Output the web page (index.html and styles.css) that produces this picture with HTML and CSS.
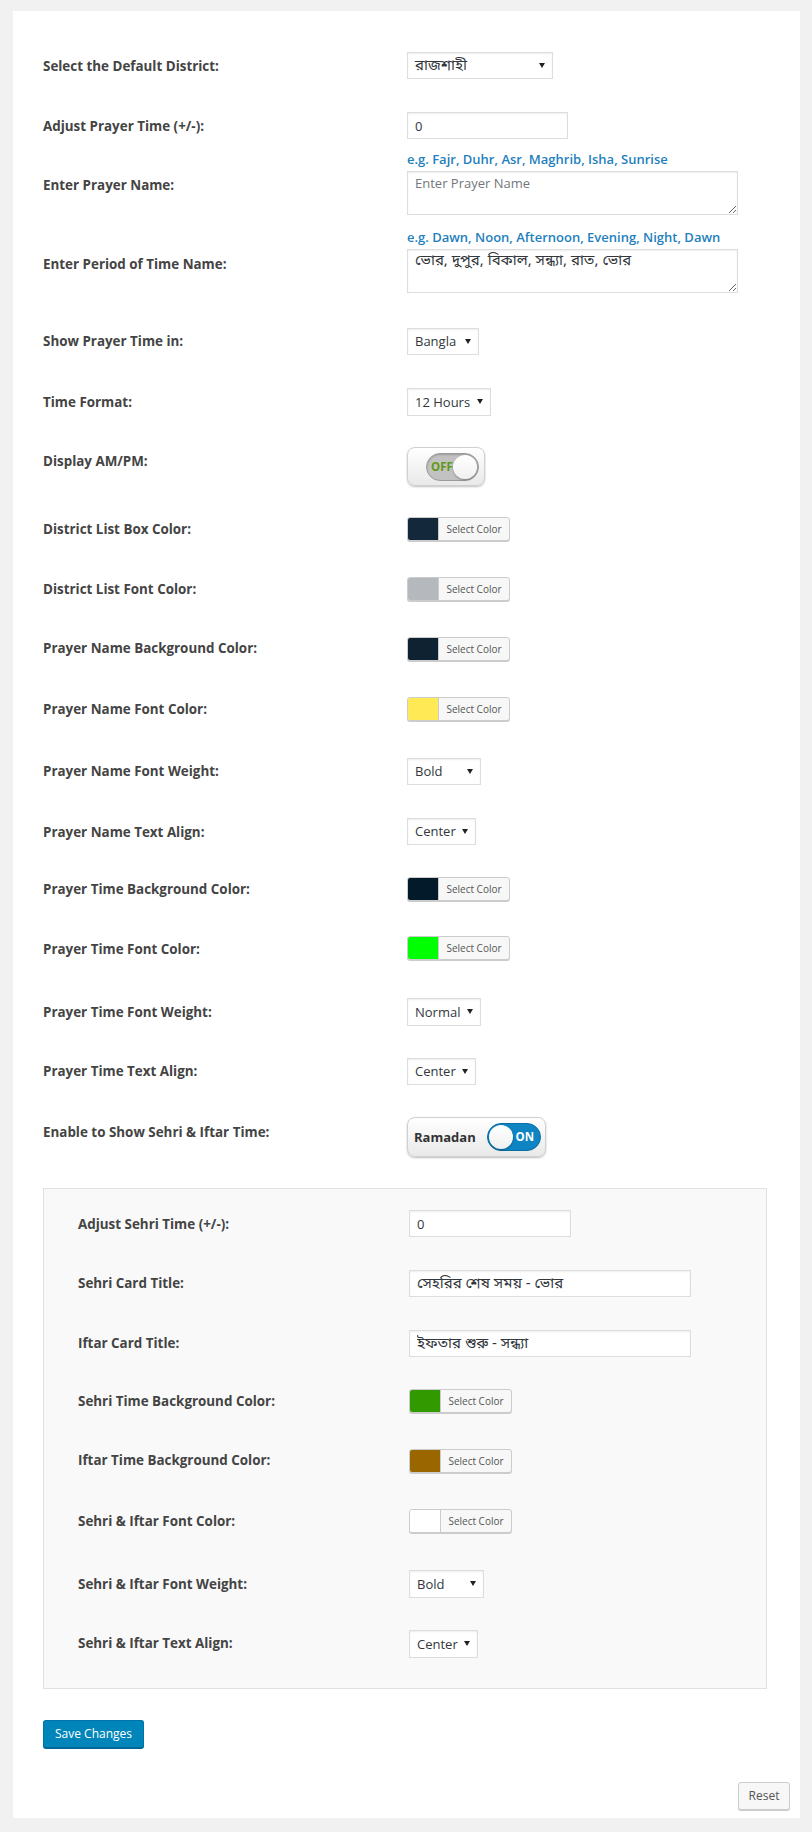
FILE: index.html
```html
<!DOCTYPE html>
<html lang="en">
<head>
<meta charset="utf-8">
<title>Prayer Time Settings</title>
<link rel="stylesheet" href="styles.css">
</head>
<body>
<div class="card">
  <form class="settings">
    <div class="row h60">
      <div class="label">Select the Default District:</div>
      <div class="field"><span class="select w146"><span class="bn">রাজশাহী</span></span></div>
    </div>
    <div class="row h53">
      <div class="label">Adjust Prayer Time (+/-):</div>
      <div class="field"><input class="text w161" type="text" value="0"></div>
    </div>
    <div class="row h78">
      <div class="label lp26">Enter Prayer Name:</div>
      <div class="field fp0">
        <div class="hint">e.g. Fajr, Duhr, Asr, Maghrib, Isha, Sunrise</div>
        <textarea class="area" placeholder="Enter Prayer Name"></textarea>
      </div>
    </div>
    <div class="row h85">
      <div class="label lp27">Enter Period of Time Name:</div>
      <div class="field fp0">
        <div class="hint">e.g. Dawn, Noon, Afternoon, Evening, Night, Dawn</div>
        <textarea class="area bn">ভোর, দুপুর, বিকাল, সন্ধ্যা, রাত, ভোর</textarea>
      </div>
    </div>
    <div class="row h60">
      <div class="label lp19">Show Prayer Time in:</div>
      <div class="field"><span class="select w72">Bangla</span></div>
    </div>
    <div class="row h59">
      <div class="label">Time Format:</div>
      <div class="field"><span class="select w84 tall">12 Hours</span></div>
    </div>
    <div class="row h70">
      <div class="label">Display AM/PM:</div>
      <div class="field">
        <span class="toggle off-toggle"><span class="track off"><span class="track-text">OFF</span><span class="knob"></span></span></span>
      </div>
    </div>
    <div class="row h60">
      <div class="label lp18">District List Box Color:</div>
      <div class="field"><span class="color-btn"><span class="swatch" style="background:#13283a"></span><span class="color-text">Select Color</span></span></div>
    </div>
    <div class="row h60">
      <div class="label lp18">District List Font Color:</div>
      <div class="field"><span class="color-btn"><span class="swatch" style="background:#b5b9bd"></span><span class="color-text">Select Color</span></span></div>
    </div>
    <div class="row h60">
      <div class="label lp17">Prayer Name Background Color:</div>
      <div class="field"><span class="color-btn"><span class="swatch" style="background:#0f2232"></span><span class="color-text">Select Color</span></span></div>
    </div>
    <div class="row h61">
      <div class="label lp18">Prayer Name Font Color:</div>
      <div class="field"><span class="color-btn"><span class="swatch" style="background:#ffe955"></span><span class="color-text">Select Color</span></span></div>
    </div>
    <div class="row h60">
      <div class="label lp19">Prayer Name Font Weight:</div>
      <div class="field"><span class="select w74">Bold</span></div>
    </div>
    <div class="row h59">
      <div class="label">Prayer Name Text Align:</div>
      <div class="field"><span class="select w69">Center</span></div>
    </div>
    <div class="row h59">
      <div class="label lp18">Prayer Time Background Color:</div>
      <div class="field"><span class="color-btn"><span class="swatch" style="background:#021a2a"></span><span class="color-text">Select Color</span></span></div>
    </div>
    <div class="row h62">
      <div class="label lp19">Prayer Time Font Color:</div>
      <div class="field"><span class="color-btn"><span class="swatch" style="background:#00ff00"></span><span class="color-text">Select Color</span></span></div>
    </div>
    <div class="row h60">
      <div class="label">Prayer Time Font Weight:</div>
      <div class="field"><span class="select w74 tall">Normal</span></div>
    </div>
    <div class="row h59">
      <div class="label lp19">Prayer Time Text Align:</div>
      <div class="field"><span class="select w69">Center</span></div>
    </div>
    <div class="row h70">
      <div class="label lp21">Enable to Show Sehri &amp; Iftar Time:</div>
      <div class="field">
        <span class="toggle ramadan-toggle"><span class="toggle-label">Ramadan</span><span class="track on"><span class="knob"></span><span class="track-text">ON</span></span></span>
      </div>
    </div>

    <div class="panel">
      <div class="row h60">
        <div class="label">Adjust Sehri Time (+/-):</div>
        <div class="field"><input class="text w162" type="text" value="0"></div>
      </div>
      <div class="row h60">
        <div class="label lp19">Sehri Card Title:</div>
        <div class="field"><input class="text w282 bn" type="text" value="সেহরির শেষ সময় - ভোর"></div>
      </div>
      <div class="row h59">
        <div class="label lp19">Iftar Card Title:</div>
        <div class="field"><input class="text w282 bn" type="text" value="ইফতার শুরু - সন্ধ্যা"></div>
      </div>
      <div class="row h60">
        <div class="label lp18">Sehri Time Background Color:</div>
        <div class="field"><span class="color-btn"><span class="swatch" style="background:#339900"></span><span class="color-text">Select Color</span></span></div>
      </div>
      <div class="row h60">
        <div class="label lp17">Iftar Time Background Color:</div>
        <div class="field"><span class="color-btn"><span class="swatch" style="background:#996600"></span><span class="color-text">Select Color</span></span></div>
      </div>
      <div class="row h61">
        <div class="label lp18">Sehri &amp; Iftar Font Color:</div>
        <div class="field"><span class="color-btn"><span class="swatch" style="background:#ffffff"></span><span class="color-text">Select Color</span></span></div>
      </div>
      <div class="row h60">
        <div class="label">Sehri &amp; Iftar Font Weight:</div>
        <div class="field"><span class="select w75 tall">Bold</span></div>
      </div>
      <div class="row h58">
        <div class="label lp19">Sehri &amp; Iftar Text Align:</div>
        <div class="field"><span class="select w69 tall">Center</span></div>
      </div>
    </div>

    <div class="actions">
      <button type="button" class="btn-primary">Save Changes</button>
    </div>
    <div class="reset-row">
      <button type="button" class="btn-secondary">Reset</button>
    </div>
  </form>
</div>
</body>
</html>
```
FILE: styles.css
```css
html, body {
  margin: 0;
  padding: 0;
}
body {
  background: #f1f1f1;
  font-family: "Open Sans", "Noto Sans", "Noto Sans Bengali", "Lohit Bengali", sans-serif;
  color: #444;
  height: 1832px;
  overflow: hidden;
}
.bn {
  font-family: "Noto Sans Bengali", "Lohit Bengali", "Noto Serif Bengali", "FreeSerif", "Open Sans", sans-serif;
}
.card {
  margin: 11px 12px 0 13px;
  background: #fff;
  padding: 26px 10px 8px 30px;
}
.settings {
  display: flex;
  flex-direction: column;
}
.row {
  display: flex;
  align-items: flex-start;
  box-sizing: border-box;
}
.h53 { height: 53px; }
.h58 { height: 58px; }
.h59 { height: 59px; }
.h60 { height: 60px; }
.h61 { height: 61px; }
.h62 { height: 62px; }
.h70 { height: 70px; }
.h78 { height: 78px; }
.h85 { height: 85px; }

.label {
  width: 364px;
  flex: none;
  padding-top: 20px;
  font-size: 13.4px;
  font-weight: 700;
  line-height: 18px;
  color: #444;
}
.lp17 { padding-top: 17px; }
.lp18 { padding-top: 18px; }
.lp19 { padding-top: 19px; }
.lp21 { padding-top: 21px; }
.lp26 { padding-top: 26px; }
.lp27 { padding-top: 27px; }

.field {
  padding-top: 15px;
  display: flex;
  flex-direction: column;
  align-items: flex-start;
}
.fp0 { padding-top: 0; }

.hint {
  font-size: 13px;
  font-weight: 600;
  line-height: 18px;
  color: #1f7fbd;
  height: 18px;
  white-space: nowrap;
}

.select {
  position: relative;
  box-sizing: border-box;
  display: block;
  height: 27px;
  border: 1px solid #ddd;
  background: #fff;
  box-shadow: inset 0 1px 2px rgba(0, 0, 0, 0.07);
  padding: 0 0 0 7px;
  font-size: 13px;
  line-height: 25px;
  color: #32373c;
}
.select.tall { height: 28px; line-height: 26px; }
.select::after {
  content: "";
  position: absolute;
  right: 7px;
  top: 50%;
  margin-top: -3px;
  border-left: 3px solid transparent;
  border-right: 3px solid transparent;
  border-top: 5px solid #222;
}
.select .bn { font-size: 15px; }
.w69 { width: 69px; }
.w72 { width: 72px; }
.w74 { width: 74px; }
.w75 { width: 75px; }
.w84 { width: 84px; }
.w146 { width: 146px; }
.w161 { width: 161px; }
.w162 { width: 162px; }
.w282 { width: 282px; }

.text {
  box-sizing: border-box;
  height: 27px;
  margin: 0;
  border: 1px solid #ddd;
  background: #fff;
  box-shadow: inset 0 1px 2px rgba(0, 0, 0, 0.07);
  padding: 0 0 0 7px;
  font-family: "Open Sans", "Noto Sans", sans-serif;
  font-size: 13px;
  color: #32373c;
  outline: none;
}
.text.bn {
  font-family: "Noto Sans Bengali", "Lohit Bengali", "FreeSerif", "Open Sans", sans-serif;
  font-size: 15px;
}

.area {
  display: block;
  box-sizing: border-box;
  width: 331px;
  height: 44px;
  margin: 3px 0 0;
  border: 1px solid #ddd;
  background: #fff;
  box-shadow: inset 0 1px 2px rgba(0, 0, 0, 0.07);
  padding: 2px 7px;
  font-family: "Open Sans", "Noto Sans", sans-serif;
  font-size: 13px;
  line-height: 18px;
  color: #32373c;
  resize: vertical;
  outline: none;
}
.area.bn {
  font-family: "Noto Sans Bengali", "Lohit Bengali", "FreeSerif", "Open Sans", sans-serif;
  font-size: 15px;
}
.area::placeholder { color: #72777c; }

/* toggles */
.toggle {
  box-sizing: border-box;
  display: flex;
  align-items: center;
  border: 1px solid #d0d0d0;
  border-radius: 8px;
  background: linear-gradient(#ffffff, #e9e9e9);
  box-shadow: 0 1px 2px rgba(0, 0, 0, 0.25);
}
.off-toggle {
  width: 78px;
  height: 39px;
  padding: 0 5px 0 18px;
}
.ramadan-toggle {
  width: 139px;
  height: 40px;
  padding: 0 4px 0 6px;
}
.toggle-label {
  font-size: 13px;
  font-weight: 700;
  color: #333;
  width: 74px;
}
.track {
  box-sizing: border-box;
  display: flex;
  align-items: center;
  height: 28px;
  border-radius: 14px;
  padding: 0 1px;
}
.track.off {
  width: 54px;
  background: #c2c2c2;
  border: 1px solid #9c9c9c;
  box-shadow: inset 0 1px 2px rgba(0, 0, 0, 0.2);
  justify-content: space-between;
  padding-left: 4px;
  padding-right: 1px;
}
.track.on {
  width: 55px;
  background: #0e84c2;
  border: 1px solid #0b6fa6;
  justify-content: space-between;
  padding-right: 6px;
}
.track-text {
  font-size: 11.5px;
  font-weight: 700;
  line-height: 1;
}
.track.off .track-text { color: #5f9a14; }
.track.on .track-text { color: #fff; }
.knob {
  width: 24px;
  height: 24px;
  border-radius: 50%;
  background: linear-gradient(#ffffff, #f0f0f0);
  box-shadow: 0 1px 2px rgba(0, 0, 0, 0.35);
}

/* color buttons */
.color-btn {
  box-sizing: border-box;
  display: flex;
  width: 103px;
  height: 24px;
  border: 1px solid #ccc;
  border-radius: 3px;
  box-shadow: 0 1px 0 #ccc;
  background: #f7f7f7;
  overflow: hidden;
}
.swatch {
  width: 30px;
  flex: none;
  border-right: 1px solid #ccc;
}
.color-text {
  flex: 1;
  text-align: center;
  font-size: 10px;
  line-height: 22px;
  color: #555;
}

/* panel */
.panel {
  margin: 16px 23px 0 0;
  border: 1px solid #e1e1e1;
  background: #f9f9f9;
  padding: 6px 0 15px 34px;
}
.panel .label { width: 331px; }

.actions {
  padding-top: 31px;
}
.btn-primary {
  box-sizing: border-box;
  width: 101px;
  height: 28px;
  margin: 0;
  padding: 0;
  border: 1px solid #0073aa;
  border-bottom-color: #006799;
  border-radius: 3px;
  background: #0085ba;
  box-shadow: 0 1px 0 #006799;
  color: #fff;
  font-family: "Open Sans", "Noto Sans", sans-serif;
  font-size: 12px;
  line-height: 26px;
}
.reset-row {
  display: flex;
  justify-content: flex-end;
  padding-top: 34px;
}
.btn-secondary {
  box-sizing: border-box;
  width: 52px;
  height: 28px;
  margin: 0;
  padding: 0;
  border: 1px solid #ccc;
  border-radius: 3px;
  background: #f7f7f7;
  box-shadow: 0 1px 0 #ccc;
  color: #555;
  font-family: "Open Sans", "Noto Sans", sans-serif;
  font-size: 12px;
  line-height: 26px;
}
```
